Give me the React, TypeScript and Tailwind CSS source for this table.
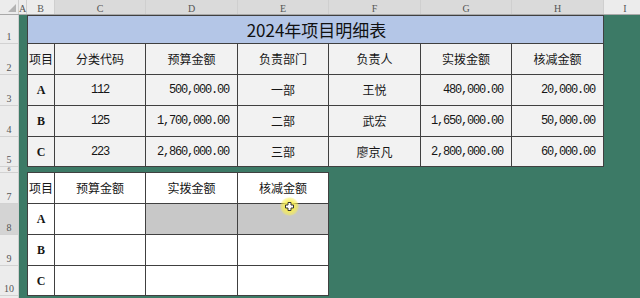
import React from "react";

const cjk = "font-['Noto_Sans_CJK_SC',sans-serif]";
const mono = "font-['Liberation_Mono',monospace] tracking-[-1.2px]";
const serif = "font-['Liberation_Serif',serif]";

type Kind = "cjk" | "num" | "letter" | "code";

const Cell: React.FC<{ text?: string; kind?: Kind; bg?: string; children?: React.ReactNode }> = ({ text, kind = "cjk", bg = "bg-[#f2f2f2]", children }) => {
  let cls = `${cjk} text-[12px] justify-center`;
  if (kind === "num") cls = `${mono} text-[12px] justify-end pr-[8px]`;
  if (kind === "code") cls = `${mono} text-[12px] justify-center`;
  if (kind === "letter") cls = `${serif} font-bold text-[12px] justify-center`;
  return (
    <div className={`relative flex items-center text-[#161616] ${bg} ${cls}`}>
      {text}
      {children}
    </div>
  );
};

const rows = [
  ["A", "112", "500,000.00", "一部", "王悦", "480,000.00", "20,000.00"],
  ["B", "125", "1,700,000.00", "二部", "武宏", "1,650,000.00", "50,000.00"],
  ["C", "223", "2,860,000.00", "三部", "廖京凡", "2,800,000.00", "60,000.00"],
];

const heads = ["项目", "分类代码", "预算金额", "负责部门", "负责人", "实拨金额", "核减金额"];

const colHeads: { label: string; w: string; hl: boolean }[] = [
  { label: "A", w: "w-[8px]", hl: false },
  { label: "B", w: "w-[28px]", hl: false },
  { label: "C", w: "w-[91px]", hl: true },
  { label: "D", w: "w-[92px]", hl: true },
  { label: "E", w: "w-[91px]", hl: true },
  { label: "F", w: "w-[92px]", hl: true },
  { label: "G", w: "w-[91px]", hl: true },
  { label: "H", w: "w-[92px]", hl: true },
];

const rowHeads: { n: string; h: string; hl?: boolean; small?: boolean }[] = [
  { n: "1", h: "h-[29px]" },
  { n: "2", h: "h-[31px]" },
  { n: "3", h: "h-[31px]" },
  { n: "4", h: "h-[31px]" },
  { n: "5", h: "h-[30px]" },
  { n: "6", h: "h-[6px]", small: true },
  { n: "7", h: "h-[31px]" },
  { n: "8", h: "h-[31px]", hl: true },
  { n: "9", h: "h-[31px]" },
  { n: "10", h: "h-[30px]" },
];

export default function App() {
  return (
    <div className="w-[640px] h-[298px] overflow-hidden bg-[#3c7a66] flex flex-col">
      {/* column letters */}
      <div className={`flex h-[15px] shrink-0 bg-[#ececec] border-b border-[#a9a9a9] ${serif} text-[10px] text-[#555]`}>
        <div className="w-[19px] border-r border-[#cfcfcf] flex items-end justify-end pr-[2px] pb-[2px]">
          <svg width="8" height="8" viewBox="0 0 8 8">
            <path d="M8 0 L8 8 L0 8 Z" fill="#b3b3b3" />
          </svg>
        </div>
        {colHeads.map((c) => (
          <div
            key={c.label}
            className={`${c.w} shrink-0 border-r border-[#cfcfcf] flex items-center justify-center pt-[3px] ${c.hl ? "bg-[#dadada]" : ""}`}
          >
            {c.label}
          </div>
        ))}
        <div className="flex-1 flex items-center justify-center pt-[3px] pl-[6px]">I</div>
      </div>

      <div className="flex flex-1">
        {/* row numbers */}
        <div className={`w-[19px] shrink-0 bg-[#ececec] border-r border-[#cfcfcf] flex flex-col ${serif} text-[10px] text-[#555]`}>
          {rowHeads.map((r) => (
            <div
              key={r.n}
              className={`${r.h} shrink-0 overflow-hidden border-b border-[#d2d2d2] flex items-end justify-center ${r.small ? "text-[6px] leading-[5px]" : "leading-[12px]"} ${r.hl ? "bg-[#d4d4d4]" : ""}`}
            >
              {r.n}
            </div>
          ))}
          <div className="flex-1" />
        </div>

        {/* sheet */}
        <div className="flex-1 pl-[8px] flex flex-col gap-[5px]">
          <div className="w-[577px] grid grid-cols-[26px_90px_91px_90px_91px_90px_91px] grid-rows-[27px_30px_30px_30px_29px] gap-px bg-[#404040] border border-[#404040]">
            <div className={`col-span-7 bg-[#b4c6e7] flex items-center justify-center ${cjk} text-[17px] text-[#111] pl-[2px]`}>
              2024年项目明细表
            </div>
            {heads.map((h) => (
              <Cell key={h} text={h} />
            ))}
            {rows.map((r) =>
              r.map((v, i) => (
                <Cell
                  key={r[0] + i}
                  text={v}
                  kind={i === 0 ? "letter" : i === 1 ? "code" : i === 2 || i === 5 || i === 6 ? "num" : "cjk"}
                />
              ))
            )}
          </div>

          <div className="w-[302px] grid grid-cols-[26px_90px_91px_90px] grid-rows-[30px_30px_30px_29px] gap-px bg-[#404040] border border-[#404040]">
            {["项目", "预算金额", "实拨金额", "核减金额"].map((h) => (
              <Cell key={h} text={h} bg="bg-white" />
            ))}
            <Cell text="A" kind="letter" bg="bg-white" />
            <Cell bg="bg-white" />
            <Cell bg="bg-[#c8c8c8]" />
            <Cell bg="bg-[#c8c8c8]">
              <div className="absolute left-[42px] top-[-7px] w-[19px] h-[19px] rounded-full bg-[radial-gradient(circle,rgba(250,240,80,0.95)_30%,rgba(250,240,80,0.5)_60%,rgba(250,240,80,0)_75%)] flex items-center justify-center">
                <svg width="9" height="9" viewBox="0 0 9 9">
                  <path d="M3 0.5 H6 V3 H8.5 V6 H6 V8.5 H3 V6 H0.5 V3 H3 Z" fill="#ffffff" stroke="#333" strokeWidth="1" />
                </svg>
              </div>
            </Cell>
            {["B", "C"].map((l) => (
              <React.Fragment key={l}>
                <Cell text={l} kind="letter" bg="bg-white" />
                <Cell bg="bg-white" />
                <Cell bg="bg-white" />
                <Cell bg="bg-white" />
              </React.Fragment>
            ))}
          </div>
        </div>
      </div>
    </div>
  );
}
